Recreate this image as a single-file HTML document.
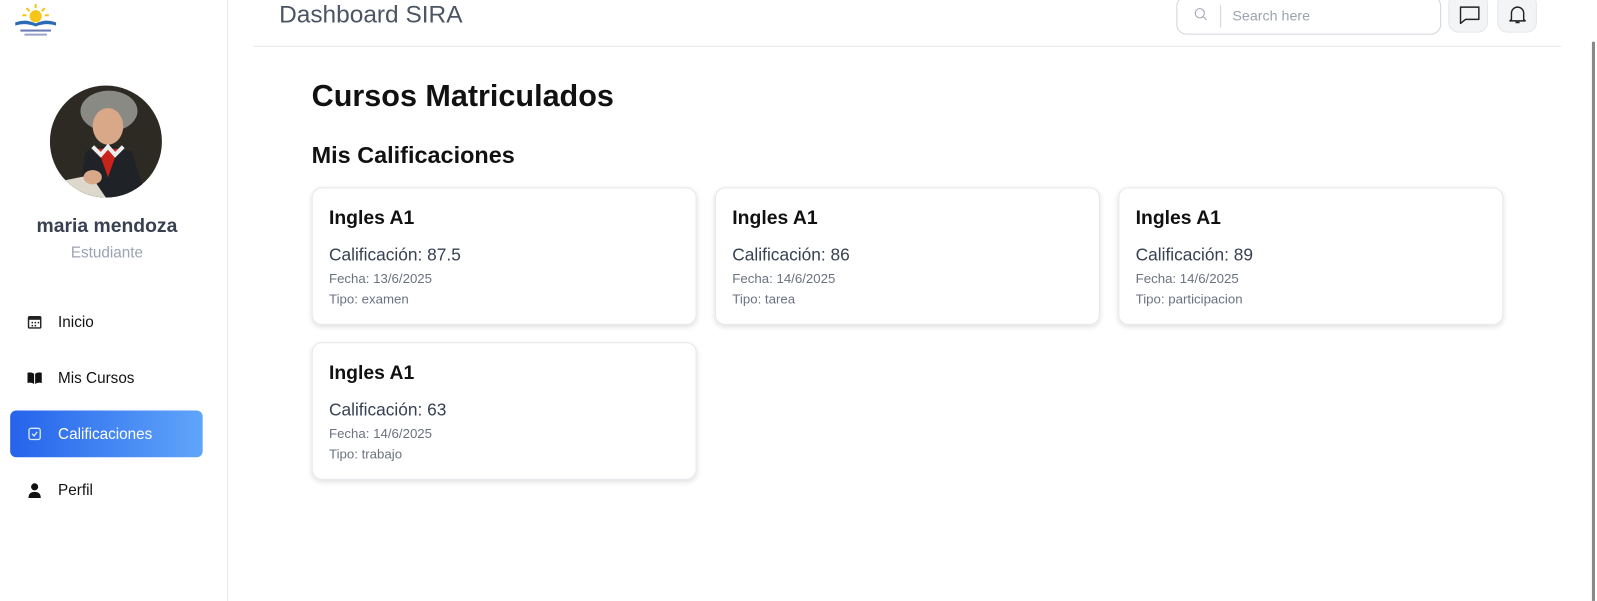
<!DOCTYPE html>
<html><head><meta charset="utf-8"><style>
*{box-sizing:border-box;margin:0;padding:0}
body{width:1597px;height:590px;overflow:hidden;background:#fff;font-family:"Liberation Sans",sans-serif;position:relative}
#w{position:absolute;left:0;top:0;width:1568px;height:580px;transform:scale(1.0185);transform-origin:0 0}
.abs{position:absolute}
.side{left:0;top:0;width:224px;height:590px;border-right:1px solid #e5e7eb}
.nav{position:absolute;left:10px;width:189px;height:46px;border-radius:6px;display:flex;align-items:center;font-size:15px;color:#111}
.nav .ic{width:47px;display:flex;justify-content:center}
.card{position:absolute;width:378px;height:135px;border:1px solid #e5e7eb;border-radius:10px;box-shadow:0 2px 5px rgba(0,0,0,.12);padding:0 16px}
.card h3{position:absolute;top:19px;left:16px;font-size:19px;font-weight:bold;color:#111}
.card .c{position:absolute;top:56px;left:16px;font-size:17px;color:#374151}
.card .f{position:absolute;top:81px;left:16px;font-size:13px;color:#6b7280}
.card .t{position:absolute;top:101px;left:16px;font-size:13px;color:#6b7280}
</style></head><body><div id="w">
<div class="abs side">
 <svg class="abs" style="left:10px;top:2px" width="50" height="36" viewBox="0 0 50 36">
  <g fill="#f5c518"><circle cx="25" cy="14" r="6"/><path d="M25 2v4M16 6l3 3M34 6l-3 3M12 13h4M34 13h4" stroke="#f5c518" stroke-width="2"/></g>
  <path d="M5 20q10-4 20 1q10-5 20-1v3q-10-3-20 1q-10-4-20-1z" fill="#2a6bb5"/>
  <rect x="10" y="27" width="30" height="2" fill="#6b7ab5"/><rect x="14" y="31" width="22" height="2" fill="#9aa3c9"/>
 </svg>
 <svg class="abs" style="left:49px;top:84px" width="110" height="110"><defs><clipPath id="cp"><circle cx="55" cy="55" r="55"/></clipPath></defs>
  <g clip-path="url(#cp)"><rect width="110" height="110" fill="#2d2a24"/>
  <ellipse cx="58" cy="25" rx="28" ry="20" fill="#8a8a85"/>
  <ellipse cx="57" cy="40" rx="15" ry="18" fill="#d9a888"/>
  <path d="M28 110L35 65L57 58L80 65L95 110z" fill="#1f2226"/>
  <path d="M47 62L57 90L67 62z" fill="#c8231c"/>
  <path d="M42 60l8 8l7-8l7 8l8-8" stroke="#eee" stroke-width="4" fill="none"/>
  <path d="M5 95L40 88L55 110H5z" fill="#ddd8cc"/>
  <ellipse cx="42" cy="90" rx="9" ry="7" fill="#d9a888"/></g>
 </svg>
 <div class="abs" style="left:0;width:210px;top:212px;text-align:center;font-size:19px;font-weight:bold;color:#374151">maria mendoza</div>
 <div class="abs" style="left:0;width:210px;top:240px;text-align:center;font-size:15px;color:#9ca3af">Estudiante</div>
 <div class="nav" style="top:293px"><span class="ic"><svg width="14" height="14" viewBox="0 0 14 14"><rect x="1" y="2" width="12" height="11" rx="1" fill="none" stroke="#222" stroke-width="1.4"/><rect x="1" y="2" width="12" height="3" fill="#222"/><g fill="#222"><rect x="4" y="7" width="1.5" height="1.5"/><rect x="7" y="7" width="1.5" height="1.5"/><rect x="10" y="7" width="1.5" height="1.5"/><rect x="4" y="10" width="1.5" height="1.5"/><rect x="7" y="10" width="1.5" height="1.5"/></g></svg></span>Inicio</div>
 <div class="nav" style="top:348px"><span class="ic"><svg width="16" height="13" viewBox="0 0 16 13"><path d="M1 1q4-1 6.5 1v10q-2.5-2-6.5-1zM15 1q-4-1-6.5 1v10q2.5-2 6.5-1z" fill="#111"/></svg></span>Mis Cursos</div>
 <div class="nav" style="top:403px;background:linear-gradient(90deg,#2563eb,#60a5fa);color:#fff"><span class="ic"><svg width="14" height="14" viewBox="0 0 14 14"><rect x="1.5" y="1.5" width="11" height="11" rx="2" fill="none" stroke="#dbeafe" stroke-width="1.3"/><path d="M4.5 7l2 2l3-4" fill="none" stroke="#dbeafe" stroke-width="1.3"/></svg></span>Calificaciones</div>
 <div class="nav" style="top:458px"><span class="ic"><svg width="14" height="15" viewBox="0 0 14 15"><circle cx="7" cy="4" r="3.5" fill="#111"/><path d="M1 15q0-6 6-6q6 0 6 6z" fill="#111"/></svg></span>Perfil</div>
</div>
<div class="abs" style="left:274px;top:1px;font-size:24px;color:#4b5563">Dashboard SIRA</div>
<div class="abs" style="left:1155px;top:-4px;width:260px;height:38px;border:1px solid #d1d5db;border-radius:10px">
 <svg class="abs" style="left:16px;top:10px" width="14" height="14" viewBox="0 0 14 14"><circle cx="6" cy="6" r="4.5" fill="none" stroke="#9ca3af"/><path d="M9.5 9.5l3 3" stroke="#9ca3af"/></svg>
 <div class="abs" style="left:42px;top:8px;width:1px;height:22px;background:#d1d5db"></div>
 <div class="abs" style="left:54px;top:10px;font-size:14px;color:#9ca3af">Search here</div>
</div>
<div class="abs" style="left:1422px;top:-6px;width:39px;height:38px;border:1px solid #e5e7eb;border-radius:10px;background:#f3f4f6"><svg class="abs" style="left:9px;top:10px" width="22" height="20" viewBox="0 0 22 20"><path d="M2 2h18v12H7l-5 4z" fill="none" stroke="#222" stroke-width="1.4" stroke-linejoin="round"/></svg></div>
<div class="abs" style="left:1470px;top:-6px;width:39px;height:38px;border:1px solid #e5e7eb;border-radius:10px;background:#f3f4f6"><svg class="abs" style="left:10px;top:9px" width="18" height="20" viewBox="0 0 18 20"><path d="M3 15V9a6 6 0 0 1 12 0v6l1.5 1.5h-15z" fill="none" stroke="#222" stroke-width="1.4" stroke-linejoin="round"/><path d="M7 18h4" stroke="#222" stroke-width="1.6"/></svg></div>
<div class="abs" style="left:249px;top:45px;width:1284px;height:1px;background:#e5e7eb"></div>
<div class="abs" style="left:1563px;top:41px;width:3px;height:549px;background:#888"></div>
<div class="abs" style="left:306px;top:78px;font-size:30px;font-weight:bold;color:#111">Cursos Matriculados</div>
<div class="abs" style="left:306px;top:139px;font-size:23px;font-weight:bold;color:#111">Mis Calificaciones</div>
<div class="card" style="left:306px;top:184px"><h3>Ingles A1</h3><div class="c">Calificación: 87.5</div><div class="f">Fecha: 13/6/2025</div><div class="t">Tipo: examen</div></div>
<div class="card" style="left:702px;top:184px"><h3>Ingles A1</h3><div class="c">Calificación: 86</div><div class="f">Fecha: 14/6/2025</div><div class="t">Tipo: tarea</div></div>
<div class="card" style="left:1098px;top:184px"><h3>Ingles A1</h3><div class="c">Calificación: 89</div><div class="f">Fecha: 14/6/2025</div><div class="t">Tipo: participacion</div></div>
<div class="card" style="left:306px;top:336px"><h3>Ingles A1</h3><div class="c">Calificación: 63</div><div class="f">Fecha: 14/6/2025</div><div class="t">Tipo: trabajo</div></div>
</div></body></html>
